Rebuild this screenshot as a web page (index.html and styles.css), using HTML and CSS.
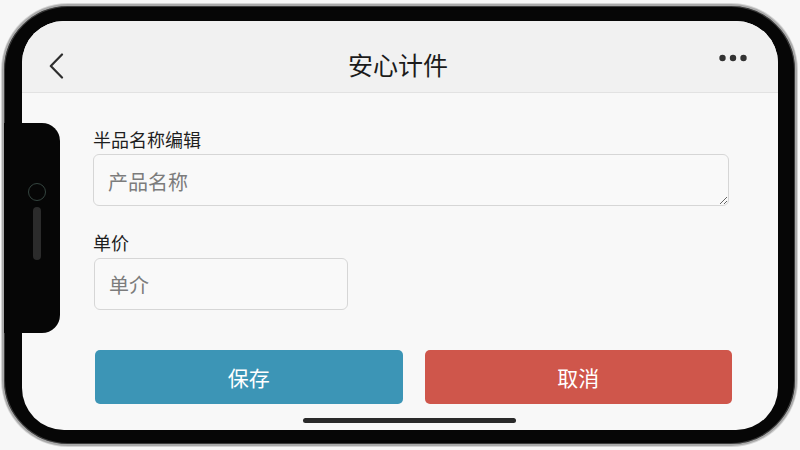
FILE: index.html
```html
<!DOCTYPE html>
<html lang="zh-CN">
<head>
<meta charset="utf-8">
<title>安心计件</title>
<link rel="stylesheet" href="styles.css">
</head>
<body>
<div class="phone">
  <div class="screen">
    <header class="topbar">
      <div class="left">
        <svg class="back" width="15" height="26" viewBox="0 0 15 26"><path d="M13 1.5 L1.8 13 L13 24.5" fill="none" stroke="#2e2e2e" stroke-width="2.2" stroke-linecap="round" stroke-linejoin="round"/></svg>
      </div>
      <h1 class="title">安心计件</h1>
      <div class="right">
        <svg class="more" width="28" height="8" viewBox="0 0 28 8"><circle cx="3.5" cy="4" r="3.2" fill="#333"/><circle cx="14" cy="4" r="3.2" fill="#333"/><circle cx="24.5" cy="4" r="3.2" fill="#333"/></svg>
      </div>
    </header>
    <main class="content">
      <label class="label">半品名称编辑</label>
      <textarea class="area" placeholder="产品名称"></textarea>
      <label class="label label-2">单价</label>
      <input class="price" type="text" placeholder="单介">
      <div class="actions">
        <button class="btn save">保存</button>
        <button class="btn cancel">取消</button>
      </div>
    </main>
  </div>
  <div class="island">
    <div class="cam"></div>
    <div class="pill"></div>
  </div>
  <div class="home"></div>
</div>
</body>
</html>
```
FILE: styles.css
```css
html, body {
  margin: 0;
  padding: 0;
}
body {
  width: 800px;
  height: 450px;
  overflow: hidden;
  background: #f7f7f7;
  font-family: "Noto Sans CJK SC", "Noto Sans", sans-serif;
}
.phone {
  position: relative;
  box-sizing: border-box;
  width: 795px;
  height: 442px;
  margin: 4px 0 0 2px;
  padding: 15px 17px 14px 18px;
  background: #060606;
  border: 2px solid #a9a9a9;
  border-radius: 66px;
  box-shadow: inset 0 0 0 1px #3c3c3c, 0 0 0 1px #d4d4d4;
  display: flex;
}
.screen {
  flex: 1;
  border-radius: 42px;
  overflow: hidden;
  background: #f8f8f8;
  display: flex;
  flex-direction: column;
}
.topbar {
  height: 72px;
  box-sizing: border-box;
  flex: none;
  background: #f1f1f1;
  border-bottom: 1px solid #e2e2e2;
  display: grid;
  grid-template-columns: 1fr auto 1fr;
  align-items: center;
  padding: 14px 31px 0 27px;
}
.left { display: flex; align-items: center; }
.right { display: flex; justify-content: flex-end; align-items: center; }
.back { display: block; margin-top: 4px; }
.more { display: block; margin-bottom: 12px; }
.title {
  margin: 0;
  font-size: 25px;
  font-weight: 400;
  color: #1b1b1b;
  line-height: 32px;
}
.content {
  display: flex;
  flex-direction: column;
  align-items: flex-start;
  padding: 34px 46px 0 71px;
}
.label {
  font-size: 18px;
  line-height: 24px;
  color: #1e1e1e;
  margin-bottom: 3px;
}
.label-2 {
  margin-top: 24px;
  margin-bottom: 4px;
}
.area, .price {
  box-sizing: border-box;
  height: 52px;
  border: 1.5px solid #d6d6d6;
  border-radius: 6px;
  background: #f9f9f9;
  font-family: inherit;
  font-size: 20px;
  line-height: 24px;
  color: #333;
  outline: none;
}
.area {
  width: calc(100% - 3px);
  padding: 15px 14px 0;
  resize: vertical;
}
.price {
  width: 254px;
  margin-left: 1px;
  padding: 0 14px;
}
.area::placeholder, .price::placeholder {
  color: #7c7c7c;
}
.actions {
  align-self: stretch;
  display: flex;
  gap: 22px;
  margin-top: 40px;
  padding-left: 2px;
}
.btn {
  flex: 1;
  height: 54px;
  border: none;
  border-radius: 5px;
  color: #fff;
  font-family: inherit;
  font-size: 21px;
}
.save { background: #3c95b6; }
.cancel { background: #cf564b; }
.island {
  position: absolute;
  left: 0;
  top: 117px;
  width: 56px;
  height: 210px;
  background: #060606;
  border-radius: 0 18px 18px 0;
}
.cam {
  position: absolute;
  left: 24px;
  top: 60px;
  width: 18px;
  height: 18px;
  box-sizing: border-box;
  border: 1.5px solid #34443f;
  border-radius: 50%;
}
.pill {
  position: absolute;
  left: 29px;
  top: 84px;
  width: 8px;
  height: 53px;
  border-radius: 4px;
  background: #2b2b2b;
}
.home {
  position: absolute;
  left: 299px;
  top: 412px;
  width: 213px;
  height: 5px;
  border-radius: 3px;
  background: #2a2a2a;
}
```
